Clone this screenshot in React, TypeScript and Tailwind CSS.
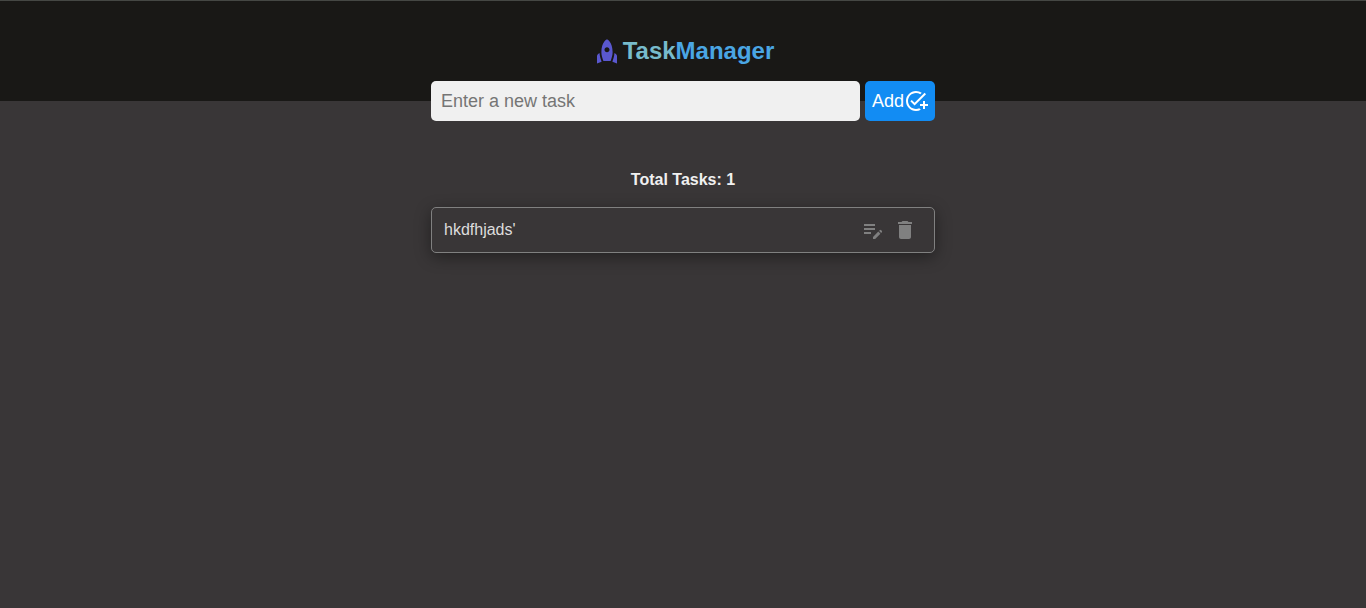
import { useState } from "react";
import type { FormEvent } from "react";
import { MdAddTask, MdDelete, MdEditNote, MdRocket } from "react-icons/md";

interface Task {
  id: number;
  title: string;
}

function Header() {
  return (
    <header className="flex h-[101px] justify-center border-t border-[#454744] bg-[#191816] pt-[35px]">
      <h1 className="flex h-[30px] items-center text-2xl font-bold">
        <MdRocket className="size-[30px] text-[#5a58cf]" aria-hidden="true" />
        <span className="ml-px text-[#77bbcc]">Task</span>
        <span className="text-[#4aa6e4]">Manager</span>
      </h1>
    </header>
  );
}

function TaskForm({ onAdd }: { onAdd: (title: string) => void }) {
  const [title, setTitle] = useState("");

  function submit(event: FormEvent) {
    event.preventDefault();
    if (!title.trim()) return;
    onAdd(title.trim());
    setTitle("");
  }

  return (
    <form onSubmit={submit} className="-mt-5 flex h-10 gap-[5px]">
      <input
        type="text"
        aria-label="New task"
        placeholder="Enter a new task"
        value={title}
        onChange={(event) => setTitle(event.target.value)}
        className="min-w-0 flex-1 rounded-[5px] bg-[#f0f0f0] px-2.5 text-lg text-[#222222] outline-none placeholder:text-[#757575]"
      />
      <button type="submit" className="flex items-center rounded-[5px] bg-[#128cf3] px-[7px] text-lg text-white">
        Add
        <MdAddTask className="size-6" aria-hidden="true" />
      </button>
    </form>
  );
}

function TaskItem({ task, onEdit, onDelete }: { task: Task; onEdit: () => void; onDelete: () => void }) {
  return (
    <li className="flex h-[46px] items-center justify-between rounded-[5px] border border-[#808080] pr-[17px] pl-3 shadow-[0_4px_16px_rgba(0,0,0,0.4)]">
      <span className="text-[#dddddd]">{task.title}</span>
      <span className="flex gap-2 text-[#808080]">
        <button type="button" aria-label="Edit task" onClick={onEdit}>
          <MdEditNote className="size-6" />
        </button>
        <button type="button" aria-label="Delete task" onClick={onDelete}>
          <MdDelete className="size-6" />
        </button>
      </span>
    </li>
  );
}

export default function App() {
  const [tasks, setTasks] = useState<Task[]>([{ id: 1, title: "hkdfhjads'" }]);

  function addTask(title: string) {
    setTasks((list) => [...list, { id: Date.now(), title }]);
  }

  function editTask(task: Task) {
    const title = window.prompt("Edit task", task.title);
    if (title) setTasks((list) => list.map((item) => (item.id === task.id ? { ...item, title } : item)));
  }

  return (
    <div className="min-h-screen bg-[#393637] font-['Liberation_Sans',Arial,sans-serif] text-base">
      <Header />
      <main className="mx-auto w-full max-w-[504px]">
        <TaskForm onAdd={addTask} />
        <h2 className="mt-[47px] mb-[15px] text-center font-bold text-[#f0f0f0]">Total Tasks: {tasks.length}</h2>
        <ul className="flex flex-col gap-3">
          {tasks.map((task) => (
            <TaskItem
              key={task.id}
              task={task}
              onEdit={() => editTask(task)}
              onDelete={() => setTasks((list) => list.filter((item) => item.id !== task.id))}
            />
          ))}
        </ul>
      </main>
    </div>
  );
}
